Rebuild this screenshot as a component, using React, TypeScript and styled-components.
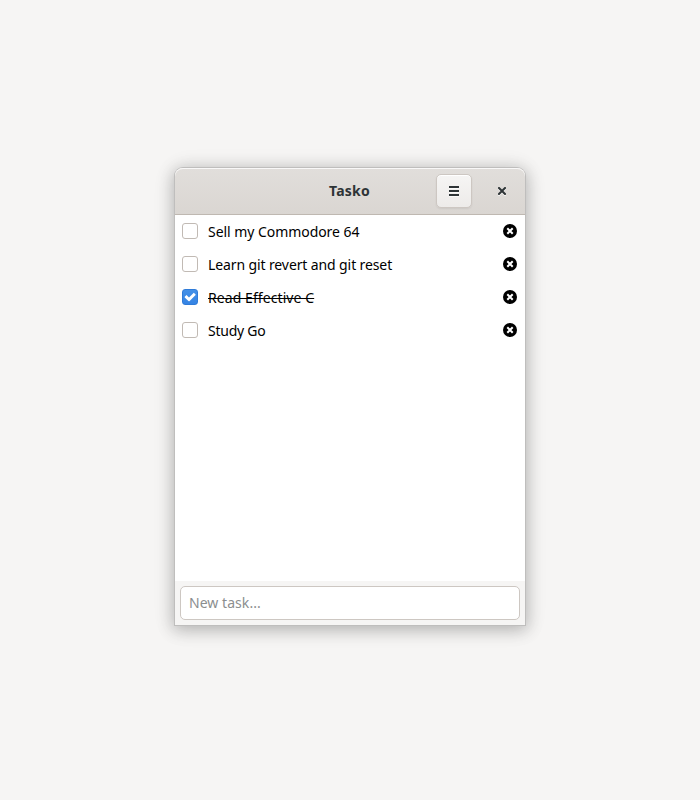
import React, { useState } from 'react';
import styled, { createGlobalStyle } from 'styled-components';

const GlobalStyle = createGlobalStyle`
  * { box-sizing: border-box; }
  body { margin: 0; background: #f6f5f4; font: 14px/20px "Noto Sans", sans-serif; }
  button, input { font: inherit; }
`;

const Desktop = styled.main`
  height: 100vh;
  display: flex;
  justify-content: center;
  padding-top: 168px;
`;

const Window = styled.section`
  width: 350px;
  height: 457px;
  display: flex;
  flex-direction: column;
  border-radius: 8px 8px 0 0;
  background: #f6f5f4;
  box-shadow: 0 0 0 1px #bfbebd, 0 3px 16px 2px rgba(0, 0, 0, 0.24), 0 2px 24px 3px rgba(0, 0, 0, 0.06);
`;

const HeaderBar = styled.header`
  height: 47px;
  flex: none;
  display: grid;
  grid-template-columns: 1fr auto 1fr;
  align-items: center;
  border-radius: 8px 8px 0 0;
  border-bottom: 1px solid #bfb8b1;
  background: linear-gradient(to top, #dad6d2, #e1dedb);
  box-shadow: inset 0 1px #f9f8f8;
`;

const Title = styled.h1`
  grid-column: 2;
  margin: 0;
  font-size: 14px;
  font-weight: 700;
  line-height: 20px;
  color: #2e3436;
  letter-spacing: 0.2px;
  padding-right: 1px;
`;

const Controls = styled.div`
  display: flex;
  align-items: center;
  justify-content: flex-end;
  gap: 13px;
  padding-right: 6px;
`;

const HeaderButton = styled.button<{ $raised?: boolean }>`
  width: ${p => (p.$raised ? 36 : 34)}px;
  height: 34px;
  display: grid;
  place-items: center;
  padding: 0;
  border: ${p => (p.$raised ? '1px solid #cdc7c2' : '0')};
  border-radius: 5px;
  background: ${p => (p.$raised ? 'linear-gradient(to top, #edebe9, #f6f5f4)' : 'transparent')};
  box-shadow: ${p => (p.$raised ? 'inset 0 1px #fff, 0 1px 2px rgba(0,0,0,.07)' : 'none')};
  color: #2e3436;
  svg { display: block; filter: drop-shadow(0 1px rgba(255, 255, 255, 0.7)); }
`;

const TaskList = styled.ul`
  height: 366px;
  flex: none;
  margin: 0;
  padding: 0;
  background: #fff;
  list-style: none;
`;

const TaskRow = styled.li`
  height: 33px;
  display: flex;
  align-items: center;
  padding: 0 8px 1px 7px;
`;

const CheckButton = styled.button<{ $checked: boolean }>`
  width: 16px;
  height: 16px;
  flex: none;
  display: grid;
  place-items: center;
  padding: 0;
  border: 1px solid ${p => (p.$checked ? '#2f7bd8' : '#c1bab4')};
  border-radius: 3px;
  background: ${p => (p.$checked ? 'linear-gradient(#4490e7, #3584e4)' : '#fff')};
  svg { display: block; }
`;

const TaskLabel = styled.span<{ $done: boolean; $tracking: number }>`
  flex: 1;
  padding: 1px 0 0 10px;
  color: #000;
  white-space: nowrap;
  letter-spacing: ${p => p.$tracking}px;
  > span {
    text-decoration: ${p => (p.$done ? 'line-through' : 'none')};
    text-decoration-thickness: 1px;
  }
`;

const DeleteButton = styled.button`
  width: 14px;
  height: 14px;
  padding: 0;
  border: 0;
  background: none;
  svg { display: block; }
`;

const Footer = styled.footer`
  flex: 1;
  padding: 5px;
`;

const TaskInput = styled.input`
  display: block;
  width: 340px;
  height: 34px;
  padding: 0 8px 2px;
  border: 1px solid #cdc7c2;
  border-radius: 5px;
  outline: 0;
  background: #fff;
  letter-spacing: 0.05px;
  color: #000;
  &::placeholder { color: #8b8e8f; opacity: 1; }
`;

const MenuIcon = () => (
  <svg width="10" height="10" shapeRendering="crispEdges">
    <path d="M0 0h10v2H0zM0 4h10v2H0zM0 8h10v2H0z" fill="#2e3436" />
  </svg>
);

const CloseIcon = () => (
  <svg width="8" height="8" viewBox="0 0 8 8">
    <path d="M1 1l6 6M7 1L1 7" stroke="#2e3436" strokeWidth="2" strokeLinecap="square" />
  </svg>
);

const CheckIcon = () => (
  <svg width="14" height="14" viewBox="0 0 14 14">
    <path d="M1.7 6.8L3.5 5L6 7.4L10.8 2.7L12.6 4.4V5L6.4 11.2H5.7L1.7 7.5Z" fill="#fff" />
  </svg>
);

const DeleteIcon = () => (
  <svg width="14" height="14" viewBox="0 0 14 14">
    <circle cx="7" cy="7" r="7" fill="#000" />
    <path d="M5 5l4 4M9 5L5 9" stroke="#fff" strokeWidth="2" strokeLinecap="square" />
  </svg>
);

const initialTasks = [
  { title: 'Sell my Commodore 64', done: false, tracking: -0.05 },
  { title: 'Learn git revert and git reset', done: false, tracking: -0.11 },
  { title: 'Read Effective C', done: true, tracking: 0.08 },
  { title: 'Study Go', done: false, tracking: -0.25 },
];

export default function App() {
  const [tasks, setTasks] = useState(initialTasks);
  const toggle = (index: number) =>
    setTasks(tasks.map((task, i) => (i === index ? { ...task, done: !task.done } : task)));
  const remove = (index: number) => setTasks(tasks.filter((_, i) => i !== index));

  return (
    <Desktop>
      <GlobalStyle />
      <Window>
        <HeaderBar>
          <Title>Tasko</Title>
          <Controls>
            <HeaderButton $raised aria-label="Menu"><MenuIcon /></HeaderButton>
            <HeaderButton aria-label="Close"><CloseIcon /></HeaderButton>
          </Controls>
        </HeaderBar>
        <TaskList>
          {tasks.map((task, i) => (
            <TaskRow key={task.title}>
              <CheckButton $checked={task.done} aria-label={task.title} onClick={() => toggle(i)}>
                {task.done && <CheckIcon />}
              </CheckButton>
              <TaskLabel $done={task.done} $tracking={task.tracking}><span>{task.title}</span></TaskLabel>
              <DeleteButton aria-label="Delete" onClick={() => remove(i)}><DeleteIcon /></DeleteButton>
            </TaskRow>
          ))}
        </TaskList>
        <Footer>
          <TaskInput placeholder="New task..." />
        </Footer>
      </Window>
    </Desktop>
  );
}
